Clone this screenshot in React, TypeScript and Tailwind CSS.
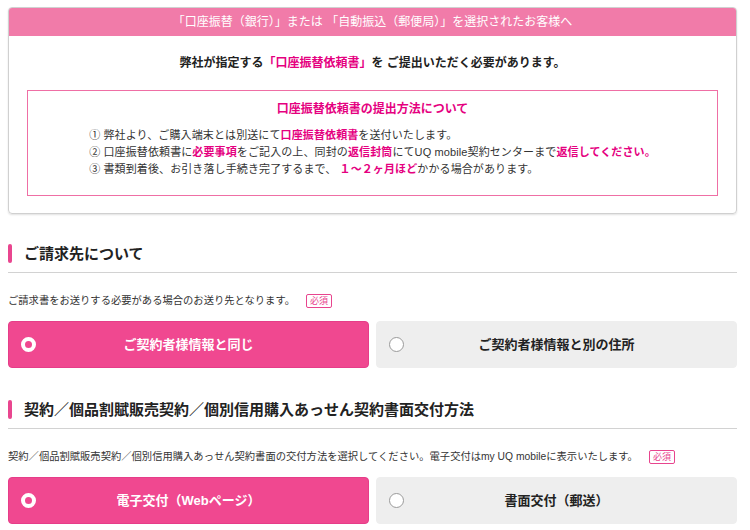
import React from "react";

const font = "font-['Liberation_Sans','Noto_Sans_CJK_JP',sans-serif]";

const Required = () => (
  <span className="ml-[11px] inline-flex h-[14px] items-center rounded-[2px] border border-[#e8448e] px-[3px] text-[9px] leading-none text-[#e8448e]">
    必須
  </span>
);

const SectionHeading = ({ title }: { title: string }) => (
  <div className="flex items-center border-b border-[#d2d2d2] pb-[9px]">
    <span className="h-[19px] w-[4px] rounded-[2px] bg-[#e9468f]" />
    <h2 className="ml-[12px] text-[15px] font-bold leading-[19px] text-[#222]">{title}</h2>
  </div>
);

const Choice = ({ label, selected }: { label: string; selected?: boolean }) => (
  <div
    className={
      selected
        ? "flex h-[47px] items-center rounded-[4px] border border-[#e63d89] bg-[#f04890] px-[12px]"
        : "flex h-[47px] items-center rounded-[4px] border border-[#eeeeee] bg-[#eeeeee] px-[12px]"
    }
  >
    {selected ? (
      <span className="h-[15px] w-[15px] rounded-full border-[4px] border-white" />
    ) : (
      <span className="h-[15px] w-[15px] rounded-full border-[1.5px] border-[#9a9a9a] bg-white" />
    )}
    <span
      className={
        selected
          ? "flex-1 text-center text-[13px] font-bold text-white"
          : "flex-1 text-center text-[13px] font-bold text-[#222]"
      }
    >
      {label}
    </span>
    <span className="w-[15px]" />
  </div>
);

export default function App() {
  return (
    <div className={`${font} min-h-[530px] bg-white pt-[7px] text-[#333]`}>
      <div className="ml-[8px] w-[729px]">
        {/* Notice box */}
        <div className="overflow-hidden rounded-[4px] border border-[#d0d0d0] shadow-[0_1px_2px_rgba(0,0,0,0.12)]">
          <div className="flex h-[28px] items-center justify-center bg-[#f17ba9] text-[12px] text-white">
            「口座振替（銀行）」または 「自動振込（郵便局）」を選択されたお客様へ
          </div>
          <div className="px-[18px] pb-[17px] pt-[18px]">
            <p className="text-center text-[12px] font-bold leading-[18px] text-[#222]">
              弊社が指定する<span className="text-[#e5007f]">「口座振替依頼書」</span>を ご提出いただく必要があります。
            </p>
            <div className="mt-[18px] border border-[#ef6fa5] px-4 pb-[15px] pt-[10px] text-center">
              <h3 className="text-[12px] font-bold leading-[16px] text-[#e5007f]">
                口座振替依頼書の提出方法について
              </h3>
              <ul className="mt-[10px] inline-block text-left text-[11px] leading-[17px] tracking-[0.01em] text-[#333]">
                <li>
                  ① 弊社より、ご購入端末とは別送にて<b className="text-[#e5007f]">口座振替依頼書</b>を送付いたします。
                </li>
                <li>
                  ② 口座振替依頼書に<b className="text-[#e5007f]">必要事項</b>をご記入の上、同封の
                  <b className="text-[#e5007f]">返信封筒</b>にてUQ mobile契約センターまで
                  <b className="text-[#e5007f]">返信してください。</b>
                </li>
                <li>
                  ③ 書類到着後、お引き落し手続き完了するまで、
                  <b className="text-[#e5007f]"> １～２ヶ月ほど</b>かかる場合があります。
                </li>
              </ul>
            </div>
          </div>
        </div>

        {/* Billing address */}
        <section className="mt-[30px]">
          <SectionHeading title="ご請求先について" />
          <p className="mt-[20px] flex items-center text-[10.3px] leading-[16px]">
            ご請求書をお送りする必要がある場合のお送り先となります。
            <Required />
          </p>
          <div className="mt-[12px] grid grid-cols-2 gap-[7px]">
            <Choice label="ご契約者様情報と同じ" selected />
            <Choice label="ご契約者様情報と別の住所" />
          </div>
        </section>

        {/* Delivery method */}
        <section className="mt-[32px]">
          <SectionHeading title="契約／個品割賦販売契約／個別信用購入あっせん契約書面交付方法" />
          <p className="mt-[20px] flex items-center text-[10.3px] leading-[16px]">
            契約／個品割賦販売契約／個別信用購入あっせん契約書面の交付方法を選択してください。電子交付はmy UQ mobileに表示いたします。
            <Required />
          </p>
          <div className="mt-[12px] grid grid-cols-2 gap-[7px]">
            <Choice label="電子交付（Webページ）" selected />
            <Choice label="書面交付（郵送）" />
          </div>
        </section>
      </div>
    </div>
  );
}
